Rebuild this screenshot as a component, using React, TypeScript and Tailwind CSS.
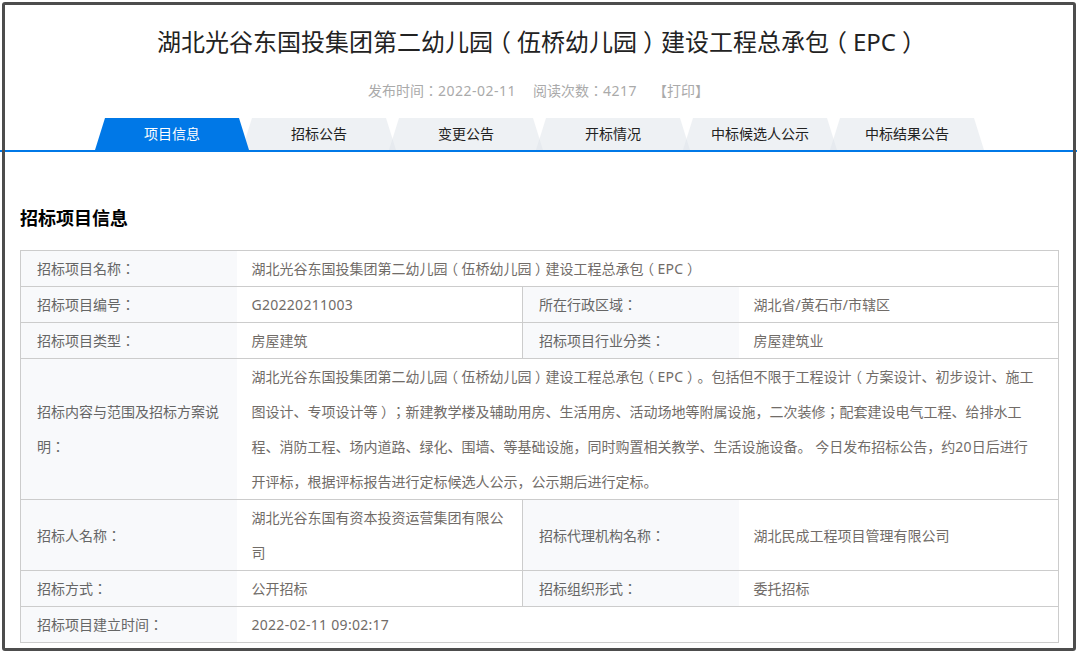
const tabs = ['项目信息', '招标公告', '变更公告', '开标情况', '中标候选人公示', '中标结果公告'];

// the TC cut of Noto centres the colon, which is how the labels read in the picture
const labelCls =
  "bg-[#f8f9fb] pl-[16px] pr-2 text-[#666666] font-normal text-left align-middle [font-family:'Noto_Sans_CJK_TC',sans-serif]";
const valueCls = 'pl-[15px] text-[#716c68] text-left align-middle';
const cellBorder = 'border border-[#cccccc]';
const leftLabel = 'border-y border-l border-[#cccccc]';

function Zh({ text, latin = 'tracking-[0.28px]' }: { text: string; latin?: string }) {
  const parts = text.split(/([（）：；]|[A-Za-z0-9\-]+(?:[ :][0-9:]+)*)/).filter(Boolean);
  return (
    <>
      {parts.map((p, i) => {
        // half-width form in a one-em box puts the bracket in the middle of its cell
        if (p === '（' || p === '）') {
          return (
            <span key={i} className="inline-block w-[1em] text-center leading-none [font-feature-settings:'halt']">
              {p}
            </span>
          );
        }
        if (p === '：' || p === '；') {
          return (
            <span key={i} className="leading-none [font-family:'Noto_Sans_CJK_TC',sans-serif]">
              {p}
            </span>
          );
        }
        if (/^[A-Za-z0-9]/.test(p)) {
          return (
            <span key={i} className={latin}>
              {p}
            </span>
          );
        }
        return p;
      })}
    </>
  );
}

const description = [
  '湖北光谷东国投集团第二幼儿园（伍桥幼儿园）建设工程总承包（EPC）。包括但不限于工程设计（方案设计、初步设计、施工',
  '图设计、专项设计等）；新建教学楼及辅助用房、生活用房、活动场地等附属设施，二次装修；配套建设电气工程、给排水工',
  '程、消防工程、场内道路、绿化、围墙、等基础设施，同时购置相关教学、生活设施设备。 今日发布招标公告，约20日后进行',
  '开评标，根据评标报告进行定标候选人公示，公示期后进行定标。',
];

export default function App() {
  return (
    <div className="relative w-[1077px] h-[651px] overflow-hidden bg-white text-[14px] [font-family:'Noto_Sans','Noto_Sans_CJK_SC',sans-serif]">
      <h1 className="h-[61px] pt-[23px] text-center text-[24px] leading-[38px] font-normal text-[#222222]">
        <Zh text="湖北光谷东国投集团第二幼儿园（伍桥幼儿园）建设工程总承包（EPC）" latin="" />
      </h1>
      <div className="mt-[18px] h-[24px] flex justify-center gap-[17px] leading-[24px] text-[#aaaaaa]">
        <span>
          <Zh text="发布时间：2022-02-11" latin="tracking-[0.5px]" />
        </span>
        <span>
          <Zh text="阅读次数：4217" latin="tracking-[0.5px]" />
        </span>
        <span className="-ml-[1px]">【打印】</span>
      </div>

      <div className="mt-[15px] flex h-[34px] border-b-2 border-[#0078e7] pl-[95px]">
        {tabs.map((t, i) => (
          <div
            key={t}
            className={`w-[154px] h-[32px] pb-[2px] flex items-center justify-center [clip-path:polygon(10px_0,144px_0,154px_100%,0_100%)] ${
              i === 0 ? 'bg-[#0078e7] text-white relative z-10' : 'bg-[#dde3ea]/50 text-[#222222] -ml-[7px]'
            }`}
          >
            {t}
          </div>
        ))}
      </div>

      <div className="px-[20px]">
        <h2 className="mt-[51px] h-[30px] text-[18px] leading-[30px] font-bold text-black">招标项目信息</h2>
        <table className="mt-[17px] w-[1038px] table-fixed border-collapse leading-[35px]">
          <colgroup>
            <col className="w-[216px]" />
            <col className="w-[286px]" />
            <col className="w-[216px]" />
            <col className="w-[320px]" />
          </colgroup>
          <tbody>
            <tr>
              <th className={`${labelCls} ${leftLabel}`}>招标项目名称：</th>
              <td colSpan={3} className={`${valueCls} ${cellBorder} border-l-0`}>
                <Zh text="湖北光谷东国投集团第二幼儿园（伍桥幼儿园）建设工程总承包（EPC）" />
              </td>
            </tr>
            <tr>
              <th className={`${labelCls} ${leftLabel}`}>招标项目编号：</th>
              <td className={`${valueCls} ${cellBorder} border-l-0`}><Zh text="G20220211003" /></td>
              <th className={`${labelCls} ${cellBorder} border-r-0`}>所在行政区域：</th>
              <td className={`${valueCls} ${cellBorder} border-l-0`}>湖北省/黄石市/市辖区</td>
            </tr>
            <tr>
              <th className={`${labelCls} ${leftLabel}`}>招标项目类型：</th>
              <td className={`${valueCls} ${cellBorder} border-l-0`}>房屋建筑</td>
              <th className={`${labelCls} ${cellBorder} border-r-0`}>招标项目行业分类：</th>
              <td className={`${valueCls} ${cellBorder} border-l-0`}>房屋建筑业</td>
            </tr>
            <tr>
              <th className={`${labelCls} ${leftLabel}`}>招标内容与范围及招标方案说明：</th>
              <td colSpan={3} className={`${valueCls} ${cellBorder} border-l-0`}>
                {description.map((line) => (
                  <div key={line} className="h-[35px] whitespace-nowrap">
                    <Zh text={line} />
                  </div>
                ))}
              </td>
            </tr>
            <tr>
              <th className={`${labelCls} ${leftLabel}`}>招标人名称：</th>
              <td className={`${valueCls} pr-4 ${cellBorder} border-l-0`}>湖北光谷东国有资本投资运营集团有限公司</td>
              <th className={`${labelCls} ${cellBorder} border-r-0`}>招标代理机构名称：</th>
              <td className={`${valueCls} ${cellBorder} border-l-0`}>湖北民成工程项目管理有限公司</td>
            </tr>
            <tr>
              <th className={`${labelCls} ${leftLabel}`}>招标方式：</th>
              <td className={`${valueCls} ${cellBorder} border-l-0`}>公开招标</td>
              <th className={`${labelCls} ${cellBorder} border-r-0`}>招标组织形式：</th>
              <td className={`${valueCls} ${cellBorder} border-l-0`}>委托招标</td>
            </tr>
            <tr>
              <th className={`${labelCls} ${leftLabel}`}>招标项目建立时间：</th>
              <td colSpan={3} className={`${valueCls} ${cellBorder} border-l-0`}><Zh text="2022-02-11 09:02:17" /></td>
            </tr>
          </tbody>
        </table>
      </div>

      {/* dark frame from the capture sits over the page */}
      <div className="absolute left-[2px] top-[2px] right-[1px] bottom-0 border-[3px] border-[#4d4d4d] rounded-[3px] pointer-events-none" />
    </div>
  );
}
